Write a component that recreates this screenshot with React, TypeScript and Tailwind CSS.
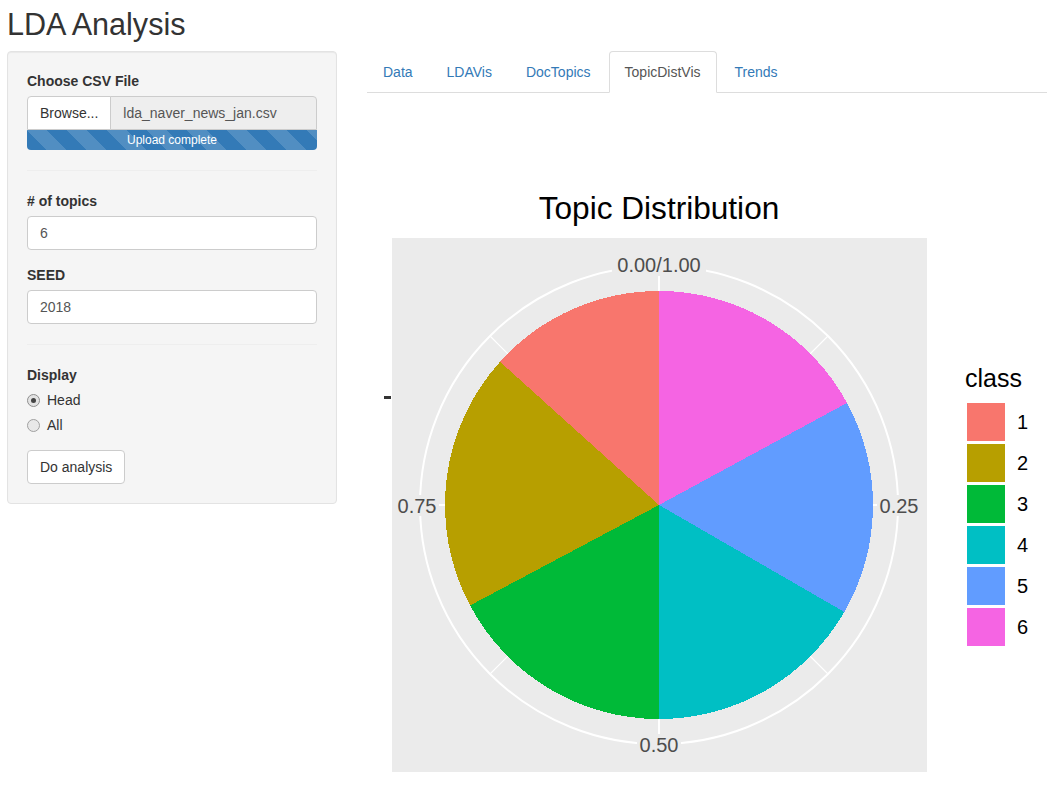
import React from 'react';

// pie slices, clockwise from 12 o'clock (degrees)
const slices = [
  { color: '#F564E3', from: 0, to: 61.5 },
  { color: '#619CFF', from: 61.5, to: 120 },
  { color: '#00BFC4', from: 120, to: 180 },
  { color: '#00BA38', from: 180, to: 242 },
  { color: '#B79F00', from: 242, to: 312 },
  { color: '#F8766D', from: 312, to: 360 },
];

const legend = [
  { label: '1', color: '#F8766D' },
  { label: '2', color: '#B79F00' },
  { label: '3', color: '#00BA38' },
  { label: '4', color: '#00BFC4' },
  { label: '5', color: '#619CFF' },
  { label: '6', color: '#F564E3' },
];

const tabs = ['Data', 'LDAVis', 'DocTopics', 'TopicDistVis', 'Trends'];

const CX = 659;
const CY = 505;
const R_PIE = 214;
const R_GRID = 239;

const pt = (r: number, deg: number): [number, number] => {
  const a = (deg * Math.PI) / 180;
  return [CX + r * Math.sin(a), CY - r * Math.cos(a)];
};

const slicePath = (from: number, to: number): string => {
  const [x0, y0] = pt(R_PIE, from);
  const [x1, y1] = pt(R_PIE, to);
  const large = to - from > 180 ? 1 : 0;
  return `M${CX} ${CY} L${x0} ${y0} A${R_PIE} ${R_PIE} 0 ${large} 1 ${x1} ${y1} Z`;
};

const Radio: React.FC<{ checked?: boolean; label: string }> = ({ checked, label }) => (
  <div className="flex h-[20px] items-center">
    <span
      className={
        checked
          ? 'flex h-[13px] w-[13px] items-center justify-center rounded-full border border-[#8f8f8f] bg-[#e3e3e3]'
          : 'flex h-[13px] w-[13px] items-center justify-center rounded-full border border-[#a0a0a0] bg-[#e8e8e8]'
      }
    >
      {checked && <span className="h-[5px] w-[5px] rounded-full bg-[#444]" />}
    </span>
    <span className="ml-[7px]">{label}</span>
  </div>
);

const Sidebar = (): JSX.Element => (
  <div className="ml-[7px] w-[330px] self-start rounded-[4px] border border-[#e3e3e3] bg-[#f5f5f5] p-[19px] shadow-[inset_0_1px_1px_rgba(0,0,0,0.05)]">
    <label className="mb-[5px] block font-bold">Choose CSV File</label>
    <div className="flex h-[34px]">
      <div className="rounded-tl-[4px] border border-[#ccc] bg-white px-[12px] py-[6px] text-[#333]">Browse...</div>
      <div className="-ml-px flex-1 rounded-tr-[4px] border border-[#ccc] bg-[#eee] px-[12px] py-[6px] text-[#555]">
        lda_naver_news_jan.csv
      </div>
    </div>
    <div className="h-[20px] rounded-b-[4px] bg-[#337ab7] bg-[linear-gradient(45deg,rgba(255,255,255,.15)_25%,transparent_25%,transparent_50%,rgba(255,255,255,.15)_50%,rgba(255,255,255,.15)_75%,transparent_75%,transparent)] bg-[length:40px_40px] text-center text-[12px] leading-[20px] text-white">
      Upload complete
    </div>

    <hr className="mt-[20px] mb-[20px] border-0 border-t border-[#eee]" />

    <label className="mb-[5px] block font-bold"># of topics</label>
    <div className="h-[34px] rounded-[4px] border border-[#ccc] bg-white px-[12px] py-[6px] text-[#555]">6</div>
    <label className="mt-[15px] mb-[5px] block font-bold">SEED</label>
    <div className="h-[34px] rounded-[4px] border border-[#ccc] bg-white px-[12px] py-[6px] text-[#555]">2018</div>

    <hr className="mt-[20px] mb-[20px] border-0 border-t border-[#eee]" />

    <label className="mb-[5px] block font-bold">Display</label>
    <Radio checked label="Head" />
    <div className="mt-[5px]">
      <Radio label="All" />
    </div>
    <button className="mt-[15px] h-[34px] rounded-[4px] border border-[#ccc] bg-white px-[12px] text-[#333]">
      Do analysis
    </button>
  </div>
);

const Chart = (): JSX.Element => {
  const major = [0, 90, 180, 270];
  const minor = [45, 135, 225, 315];
  return (
    <svg className="block" width={680} height={693} viewBox="367 93 680 693">
      <text x={659} y={219} textAnchor="middle" fontSize={31.6} fill="#000">
        Topic Distribution
      </text>

      <rect x={392} y={238} width={535} height={534} fill="#ebebeb" />
      <circle cx={CX} cy={CY} r={R_GRID} fill="none" stroke="#fff" strokeWidth={2} />
      {minor.map((d) => {
        const [x, y] = pt(R_GRID, d);
        return <line key={d} x1={CX} y1={CY} x2={x} y2={y} stroke="#fff" strokeWidth={1.1} />;
      })}
      {major.map((d) => {
        const [x, y] = pt(R_GRID, d);
        return <line key={d} x1={CX} y1={CY} x2={x} y2={y} stroke="#fff" strokeWidth={2} />;
      })}

      {slices.map((s) => (
        <path key={s.color} d={slicePath(s.from, s.to)} fill={s.color} shapeRendering="crispEdges" />
      ))}

      {/* theta labels sit on a panel-coloured box */}
      <rect x={612} y={255} width={94} height={21} fill="#ebebeb" />
      <text x={659} y={272} textAnchor="middle" fontSize={20} fill="#4d4d4d">
        0.00/1.00
      </text>
      <rect x={877} y={495} width={44} height={21} fill="#ebebeb" />
      <text x={899} y={513} textAnchor="middle" fontSize={20} fill="#4d4d4d">
        0.25
      </text>
      <rect x={637} y={734} width={44} height={21} fill="#ebebeb" />
      <text x={659} y={752} textAnchor="middle" fontSize={20} fill="#4d4d4d">
        0.50
      </text>
      <rect x={395} y={495} width={44} height={21} fill="#ebebeb" />
      <text x={417} y={513} textAnchor="middle" fontSize={20} fill="#4d4d4d">
        0.75
      </text>

      <rect x={384} y={396} width={7} height={2.5} fill="#333" shapeRendering="crispEdges" />

      <text x={965} y={387} fontSize={25} fill="#000">
        class
      </text>
      {legend.map((l, i) => (
        <g key={l.label}>
          <rect x={967} y={403 + i * 41} width={38} height={38} fill={l.color} />
          <text x={1017} y={429 + i * 41} fontSize={20} fill="#000">
            {l.label}
          </text>
        </g>
      ))}
    </svg>
  );
};

const App = (): JSX.Element => (
  <div className="h-[786px] w-[1047px] overflow-hidden bg-white font-['Liberation_Sans',Arial,sans-serif] text-[14px] leading-[20px] text-[#333]">
    <h2 className="m-0 pt-[8px] pl-[7px] text-[30.6px] leading-[33px] font-normal">LDA Analysis</h2>
    <div className="mt-[10px] flex">
      <Sidebar />
      <div className="ml-[30px] flex flex-1 flex-col">
        <ul className="m-0 flex h-[42px] list-none border-b border-[#ddd] p-0">
          {tabs.map((t) =>
            t === 'TopicDistVis' ? (
              <li key={t} className="-mb-px mr-[2px] rounded-t-[4px] border border-[#ddd] border-b-transparent bg-white px-[15px] py-[10px] text-[#555]">
                {t}
              </li>
            ) : (
              <li key={t} className="-mb-px mr-[2px] border border-transparent px-[15px] py-[10px] text-[#337ab7]">
                {t}
              </li>
            ),
          )}
        </ul>
        <Chart />
      </div>
    </div>
  </div>
);

export default App;
